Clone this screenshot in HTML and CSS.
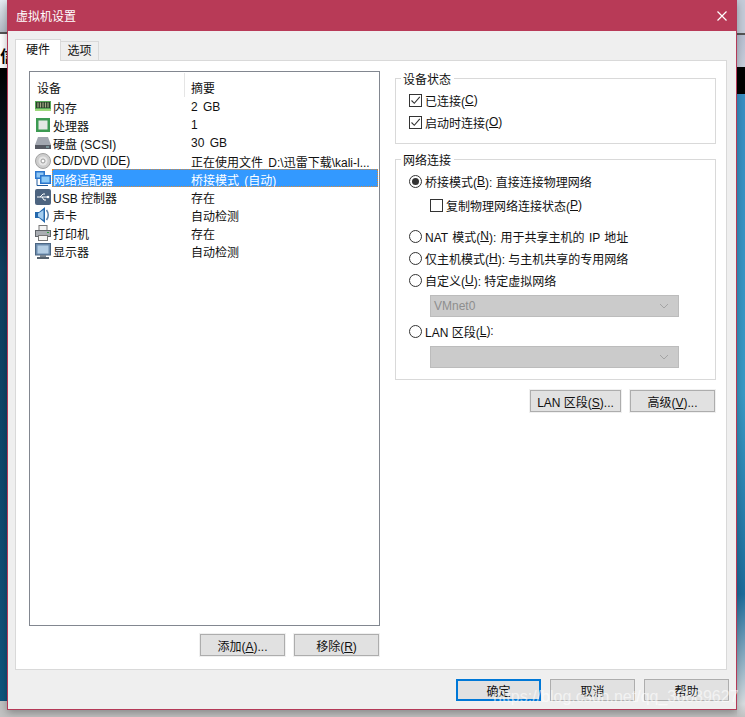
FILE: index.html
```html
<!DOCTYPE html>
<html lang="zh-CN">
<head>
<meta charset="utf-8">
<title>虚拟机设置</title>
<link rel="stylesheet" href="styles.css">
</head>
<body>
<div class="desktop">
  <div class="desk-left"><div class="dl-a"></div><div class="dl-c">信</div><div class="dl-d"></div></div>
  <div class="desk-right"><div class="dr-a"></div><div class="dr-b"></div><div class="dr-c"></div></div>
  <section class="window">
    <header class="titlebar">
      <span class="title">虚拟机设置</span>
      <svg class="close" width="10" height="10" viewBox="0 0 10 10"><path d="M0.500 0.500L9.500 9.500M9.500 0.500L0.500 9.500" stroke="#fff" stroke-width="1.200" fill="none"/></svg>
    </header>
    <div class="body">
      <div class="tabs">
        <div class="tab active">硬件</div>
        <div class="tab">选项</div>
      </div>
      <div class="panel">
        <div class="left">
          <div class="list">
            <div class="list-head"><span class="col-a">设备</span><span class="col-b">摘要</span></div>
            <div class="row"><span class="col-a"><svg class="ic" viewBox="0 0 16 16"><rect x="0" y="2" width="16" height="10" fill="#58a858"/><rect x="1" y="3" width="14" height="6" fill="#26402a"/><path d="M3 3.500V8.500M5.500 3.500V8.500M8 3.500V8.500M10.500 3.500V8.500M13 3.500V8.500" stroke="#a8a888" stroke-width="1.200"/><rect x="0" y="10" width="16" height="2" fill="#9cd87c"/></svg>内存</span><span class="col-b">2 GB</span></div>
            <div class="row"><span class="col-a"><svg class="ic" viewBox="0 0 16 16"><rect x="1" y="1" width="14" height="14" fill="#3c9a52"/><rect x="3.500" y="3.500" width="9" height="9" fill="#e4e8e4"/></svg>处理器</span><span class="col-b">1</span></div>
            <div class="row"><span class="col-a"><svg class="ic" viewBox="0 0 16 16"><path d="M3 2H13L16 10H0Z" fill="#a2a7b0"/><rect x="0" y="10" width="16" height="4" fill="#555962"/><rect x="11" y="11.500" width="3" height="1" fill="#9cc"/></svg>硬盘 (SCSI)</span><span class="col-b">30 GB</span></div>
            <div class="row"><span class="col-a"><svg class="ic" viewBox="0 0 16 16"><circle cx="8" cy="8" r="7.500" fill="#cdcdcd" stroke="#a2a2a2"/><circle cx="8" cy="8" r="4.500" fill="#e6e6e6"/><circle cx="8" cy="8" r="2" fill="#fff" stroke="#999"/></svg>CD/DVD (IDE)</span><span class="col-b">正在使用文件 D:\迅雷下载\kali-l...</span></div>
            <div class="row selected"><svg class="ic" viewBox="0 0 16 16"><rect x="0" y="0" width="10" height="8" fill="#2b76cc"/><rect x="1.500" y="1.500" width="7" height="5" fill="#8fc6f4"/><rect x="5" y="4" width="11" height="9" fill="#2b76cc"/><rect x="6.500" y="5.500" width="8" height="6" fill="#8ccaf8"/><path d="M2 8V14.500H13" stroke="#1f5a9e" fill="none"/></svg><div class="sel-band"><span class="sel-a">网络适配器</span><span class="col-b">桥接模式 (自动)</span></div></div>
            <div class="row"><span class="col-a"><svg class="ic" viewBox="0 0 16 16"><rect x="0" y="0" width="16" height="16" rx="2" fill="#4d6480"/><path d="M2 8H13M5 8L8 5H10M7 8L9 11H11" stroke="#fff" fill="none"/><circle cx="13" cy="8" r="1.300" fill="#fff"/></svg>USB 控制器</span><span class="col-b">存在</span></div>
            <div class="row"><span class="col-a"><svg class="ic" viewBox="0 0 16 16"><path d="M0 5H4L10 0V16L4 11H0Z" fill="#2468ad"/><path d="M3 6.500L8.500 3V13L3 9.500Z" fill="#a4cdf0"/><path d="M11.500 3Q15 8 11.500 13" stroke="#5d82a8" stroke-width="1.500" fill="none"/></svg>声卡</span><span class="col-b">自动检测</span></div>
            <div class="row"><span class="col-a"><svg class="ic" viewBox="0 0 16 16"><rect x="4" y="0.500" width="8" height="5" fill="#f4f4f4" stroke="#777"/><rect x="0.500" y="5.500" width="15" height="6" fill="#a8acb2" stroke="#60646a"/><rect x="3.500" y="10.500" width="9" height="5" fill="#f4f4f4" stroke="#777"/><rect x="12" y="7" width="2" height="1" fill="#2c9c3c"/></svg>打印机</span><span class="col-b">存在</span></div>
            <div class="row"><span class="col-a"><svg class="ic" viewBox="0 0 16 16"><rect x="0.500" y="0.500" width="15" height="11.500" fill="#6c8cae" stroke="#4c6682"/><rect x="2.500" y="2.500" width="11" height="8" fill="#b3cde4"/><rect x="5" y="12" width="6" height="2" fill="#7c8894"/><rect x="2" y="14" width="12" height="2" fill="#56626e"/></svg>显示器</span><span class="col-b">自动检测</span></div>
          </div>
          <div class="btn-row list-btns">
            <button class="btn">添加(<u>A</u>)...</button>
            <button class="btn">移除(<u>R</u>)</button>
          </div>
        </div>
        <div class="right">
          <fieldset class="group status">
            <legend>设备状态</legend>
            <label class="opt"><span class="check on"><svg width="11" height="11" viewBox="0 0 11 11"><path d="M1.500 5.500L4.300 8.300L9.800 1.800" stroke="#333" stroke-width="1.100" fill="none"/></svg></span>已连接(<u>C</u>)</label>
            <label class="opt"><span class="check on"><svg width="11" height="11" viewBox="0 0 11 11"><path d="M1.500 5.500L4.300 8.300L9.800 1.800" stroke="#333" stroke-width="1.100" fill="none"/></svg></span>启动时连接(<u>O</u>)</label>
          </fieldset>
          <fieldset class="group network">
            <legend>网络连接</legend>
            <label class="opt"><span class="radio on"></span>桥接模式(<u>B</u>): 直接连接物理网络</label>
            <label class="opt sub"><span class="check"></span>复制物理网络连接状态(<u>P</u>)</label>
            <label class="opt nat"><span class="radio"></span>NAT 模式(<u>N</u>): 用于共享主机的 IP 地址</label>
            <label class="opt"><span class="radio"></span>仅主机模式(<u>H</u>): 与主机共享的专用网络</label>
            <label class="opt"><span class="radio"></span>自定义(<u>U</u>): 特定虚拟网络</label>
            <div class="select"><span>VMnet0</span><svg width="10" height="6" viewBox="0 0 10 6"><path d="M1 1L5 5L9 1" stroke="#a4a4a4" fill="none"/></svg></div>
            <label class="opt"><span class="radio"></span>LAN 区段(<u>L</u>):</label>
            <div class="select"><span></span><svg width="10" height="6" viewBox="0 0 10 6"><path d="M1 1L5 5L9 1" stroke="#a4a4a4" fill="none"/></svg></div>
          </fieldset>
          <div class="btn-row net-btns">
            <button class="btn wide">LAN 区段(<u>S</u>)...</button>
            <button class="btn">高级(<u>V</u>)...</button>
          </div>
        </div>
      </div>
      <div class="btn-row footer">
        <button class="btn default">确定</button>
        <button class="btn">取消</button>
        <button class="btn">帮助</button>
      </div>
    </div>
  </section>
  <div class="watermark">https://blog.csdn.net/qq_36889627</div>
</div>
</body>
</html>
```
FILE: styles.css
```css
* { box-sizing: border-box; }
html, body { margin: 0; padding: 0; }
body { width: 745px; height: 717px; overflow: hidden; font-family: "Liberation Sans", "Noto Sans CJK SC", sans-serif; font-size: 12px; color: #111; }
.desktop { position: relative; width: 745px; height: 717px; background: #c2c2c2; overflow: hidden; }
.desk-left, .desk-right { position: absolute; top: 0; display: flex; flex-direction: column; height: 701px; }
.desk-left { left: 0; width: 7px; }
.desk-right { right: 0; width: 8px; height: 717px; }
.dl-a { height: 34px; background: linear-gradient(#e4eaf0, #b4bcc6 32px, #555 32px, #555); }
.dl-c { height: 34px; background: #fff; font-size: 16px; font-weight: bold; line-height: 34px; color: #000; overflow: hidden; padding-top: 6px; }
.dl-d { flex: 1; background: linear-gradient(#000 0, #050a10 30px, #0f3f60 200px, #10557e); }
.dr-a { height: 67px; background: linear-gradient(#c4cbd8 0, #c4cbd8 33px, #555 33px, #555 35px, #b9c0d2 35px, #c9cedb); }
.dr-b { height: 27px; background: #000; }
.dr-c { flex: 1; background: linear-gradient(#3a8fc4, #3a9ac6 300px, #1d6c9c 500px, #d8dde0 610px, #c2c2c2); }
.window { position: absolute; left: 7px; top: 0; width: 730px; height: 710px; background: #efefef; border: 1px solid #b43a58; border-top: 0; box-shadow: 0 3px 8px rgba(0,0,0,.3); display: flex; flex-direction: column; }
.titlebar { height: 31px; flex: none; background: #b83a57; color: #fff; display: flex; align-items: center; justify-content: space-between; padding: 0 9px 0 8px; font-size: 12px; }
.close { display: block; }
.body { flex: 1; display: flex; flex-direction: column; padding: 8px 9px 8px 7px; min-height: 0; }
.tabs { display: flex; height: 21px; flex: none; position: relative; z-index: 1; }
.tab { width: 38px; height: 19px; margin-top: 2px; background: #efefef; border: 1px solid #d9d9d9; border-left: 0; border-bottom: 0; text-align: center; line-height: 19px; }
.tab.active { width: 46px; height: 22px; margin-top: 0; background: #fff; border-left: 1px solid #d9d9d9; line-height: 20px; }
.panel { height: 610px; flex: none; background: #fff; border: 1px solid #d9d9d9; display: flex; padding: 10px 10px 0 13px; }
.left { width: 351px; flex: none; display: flex; flex-direction: column; }
.list { width: 351px; height: 555px; border: 1px solid #828790; padding-top: 1px; flex: none; }
.list-head { height: 24px; display: flex; }
.list-head .col-a { padding: 4px 0 0 7px; border-right: 1px solid #e5e5e5; height: 24px; }
.list-head .col-b { padding-top: 4px; height: 24px; display: flex; align-items: center; word-spacing: 0; }
.col-a { width: 155px; flex: none; display: flex; align-items: center; white-space: nowrap; }
.col-b { padding-left: 6px; white-space: nowrap; word-spacing: 2px; }
.row { height: 18px; padding-top: 2px; display: flex; align-items: center; }
.ic { width: 16px; height: 16px; margin: 0 2px 0 5px; flex: none; }
.selected { width: 348px; padding-top: 0; }
.selected .ic { margin: 2px 1px 0 5px; }
.sel-band { flex: 1; height: 18px; padding-top: 2px; display: flex; align-items: center; background: #3399ff; color: #fff; outline: 1px dotted #d98a3a; outline-offset: -1px; }
.sel-a { width: 133px; padding-left: 1px; flex: none; }
.btn-row { display: flex; justify-content: flex-end; }
.btn { height: 22px; width: 85px; padding: 0; background: #e1e1e1; border: 1px solid #adadad; outline: 1px solid #f0f0f0; font: inherit; color: #111; }
u { text-decoration: underline; text-underline-offset: 1px; }
.list-btns { gap: 9px; margin-top: 8px; width: 350px; }
.right { margin-left: 15px; width: 321px; flex: none; }
.group { margin: 0; border: 1px solid #d9d9d9; min-width: 0; }
.group legend { padding: 0 3px 0 2px; margin-left: -8px; height: 10px; line-height: 14px; }
.status { height: 71px; margin-top: 2px; padding: 6px 0 0 13px; }
.network { margin-top: 10px; height: 226px; padding: 6px 0 0 13px; }
.opt { display: flex; align-items: center; height: 22px; white-space: nowrap; }
.check { width: 13px; height: 13px; border: 1px solid #333; margin-right: 3px; flex: none; background: #fff; display: flex; align-items: center; justify-content: center; }
.check svg { flex: none; display: block; }
.radio { width: 13px; height: 13px; border: 1px solid #333; border-radius: 50%; margin-right: 3px; flex: none; background: #fff; }
.radio.on { display: flex; align-items: center; justify-content: center; }
.radio.on::after { content: ""; width: 7px; height: 7px; border-radius: 50%; background: #333; }
.sub { margin-left: 21px; height: 26px; }
.nat { margin-top: 7px; word-spacing: 1px; }
.select { margin: 4px 0 3px 21px; width: 249px; height: 22px; background: #cbcbcb; border: 1px solid #bcbcbc; display: flex; align-items: center; justify-content: space-between; padding: 0 9px 0 3px; color: #8e8e8e; }
.net-btns { gap: 9px; margin-top: 10px; padding-right: 1px; }
.wide { width: 91px; }
.footer { gap: 9px; margin: 9px -2px 0 0; }
.default { border: 2px solid #0078d7; }
.watermark { position: absolute; left: 493px; top: 688px; font-size: 16px; line-height: 18px; color: rgba(255,255,255,.6); white-space: nowrap; pointer-events: none; }
```
